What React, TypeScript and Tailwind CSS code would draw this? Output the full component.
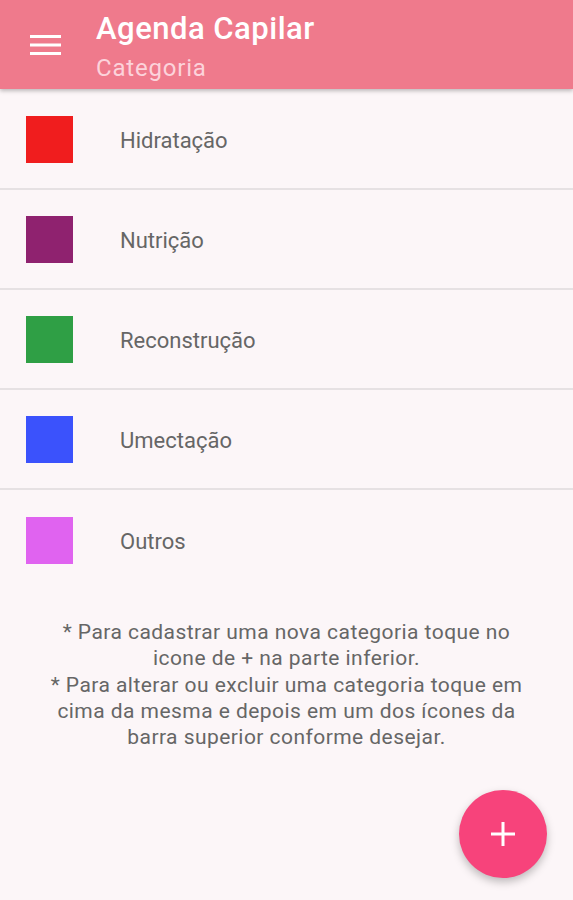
import React from "react";

const items = [
  { name: "Hidratação", color: "bg-[#f01d1e]" },
  { name: "Nutrição", color: "bg-[#8f226f]" },
  { name: "Reconstrução", color: "bg-[#2f9f45]" },
  { name: "Umectação", color: "bg-[#3b52fc]" },
  { name: "Outros", color: "bg-[#e063f0]" },
];

export default function App() {
  return (
    <div
      className="w-[573px] h-[900px] bg-[#fcf6f8] relative overflow-hidden"
      style={{ fontFamily: "Roboto, 'Noto Sans', sans-serif" }}
    >
      <header className="h-[89px] bg-[#ef7a8c] flex items-start shadow-[0_2px_4px_rgba(0,0,0,0.25)] relative z-10">
        <div className="w-[96px] h-[89px] flex items-center pl-[30px] pt-[1px]">
          <svg width="31" height="20" viewBox="0 0 31 20">
            <rect x="0" y="0" width="31" height="3" fill="#fff" />
            <rect x="0" y="8.5" width="31" height="3" fill="#fff" />
            <rect x="0" y="17" width="31" height="3" fill="#fff" />
          </svg>
        </div>
        <div className="flex flex-col pt-[11px]">
          <div className="text-white text-[31px] leading-[36px] font-medium tracking-[0.5px]">Agenda Capilar</div>
          <div className="text-[#fcd3db] text-[24px] leading-[28px] mt-[7px] tracking-[0.8px]">Categoria</div>
        </div>
      </header>
      <div className="flex flex-col mt-[1px]">
        {items.map((it, i) => (
          <div
            key={it.name}
            className={`h-[100px] flex items-center ${i < items.length - 1 ? "border-b-2 border-[#e6e1e3]" : ""}`}
          >
            <div className={`ml-[26px] w-[47px] h-[47px] ${it.color}`} />
            <div className="ml-[47px] pt-[3px] text-[22px] text-[#666666]">{it.name}</div>
          </div>
        ))}
      </div>
      <div className="mt-[29px] px-[40px] text-center text-[21px] leading-[26.3px] tracking-[0.45px] text-[#666666]">
        <p>* Para cadastrar uma nova categoria toque no icone de + na parte inferior.</p>
        <p>* Para alterar ou excluir uma categoria toque em cima da mesma e depois em um dos ícones da barra superior conforme desejar.</p>
      </div>
      <button className="absolute left-[459px] top-[790px] w-[88px] h-[88px] rounded-full bg-[#f7437b] flex items-center justify-center shadow-[0_4px_8px_rgba(0,0,0,0.25)]">
        <svg width="24" height="24" viewBox="0 0 24 24">
          <rect x="10.5" y="0" width="3" height="24" fill="#fff" />
          <rect x="0" y="10.5" width="24" height="3" fill="#fff" />
        </svg>
      </button>
    </div>
  );
}
